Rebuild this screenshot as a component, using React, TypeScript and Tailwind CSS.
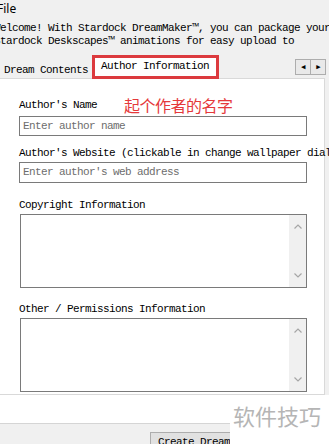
import { FC } from "react";

const mono = "font-['Liberation_Mono',monospace] text-[11px] tracking-[-0.6px]";

const Chevron: FC<{ up?: boolean }> = ({ up }) => (
  <svg width="8" height="5" viewBox="0 0 8 5" fill="none">
    <path
      d={up ? "M0.5 4.5 L4 1 L7.5 4.5" : "M0.5 0.5 L4 4 L7.5 0.5"}
      stroke="#a6a6a6"
      strokeWidth="1.2"
    />
  </svg>
);

const TextArea: FC = () => (
  <div className="ml-[1px] flex h-[74px] w-[287px] border border-[#7a7a7a] bg-white">
    <div className="flex-1" />
    <div className="flex w-[17px] flex-col items-center justify-between bg-[#f0f0f0] py-[9px]">
      <Chevron up />
      <Chevron />
    </div>
  </div>
);

const Field: FC<{ placeholder: string; h: string }> = ({ placeholder, h }) => (
  <div
    className={`flex w-[288px] items-center border border-[#7a7a7a] bg-white pl-[3px] text-[#6d6d6d] ${h} ${mono}`}
  >
    {placeholder}
  </div>
);

const App: FC = () => {
  return (
    <div className="relative h-[444px] w-[329px] overflow-hidden bg-[#f0f0f0] text-black">
      {/* menu */}
      <div className="flex h-[18px] items-center font-['Noto_Sans',sans-serif] text-[12px]">
        <span className="-ml-[3px]">File</span>
      </div>

      {/* welcome text */}
      <div className={`mt-[4px] -ml-[6px] whitespace-nowrap leading-[13px] ${mono}`}>
        <div>Welcome! With Stardock DreamMaker™, you can package your</div>
        <div>Stardock Deskscapes™ animations for easy upload to</div>
      </div>

      {/* tabs */}
      <div className={`relative z-10 mt-[7px] -mb-[1px] flex h-[24px] items-end ${mono}`}>
        <div className="flex h-[20px] w-[92px] items-center pl-[4px] pt-[3px]">Dream Contents</div>
        <div className="flex h-[24px] w-[127px] items-center border-[3px] border-[#dc3a3e] bg-white pl-[6px] pb-[1px]">
          Author Information
        </div>
        <div className="mr-[3px] mb-[4px] ml-auto flex self-end">
          <div className="flex h-[16px] w-[16px] items-center justify-center border border-[#adadad] bg-[#e9e9e9] text-[7px] leading-none text-black">
            ◀
          </div>
          <div className="-ml-[1px] flex h-[16px] w-[16px] items-center justify-center border border-[#adadad] bg-[#e9e9e9] text-[7px] leading-none text-black">
            ▶
          </div>
        </div>
      </div>

      {/* panel */}
      <div className={`-ml-[2px] h-[317px] w-[327px] border border-[#d9d9d9] bg-white pl-[20px] ${mono}`}>
        <div className="mt-[19px] flex h-[14px] items-center leading-[14px]">
          <span>Author's Name</span>
          <span className="ml-[27px] font-['Noto_Sans_CJK_SC',sans-serif] text-[16px] tracking-[-0.5px] text-[#e5393b]">
            起个作者的名字
          </span>
        </div>
        <div className="mt-[4px]">
          <Field placeholder="Enter author name" h="h-[20px]" />
        </div>
        <div className="mt-[10px] h-[14px] whitespace-nowrap leading-[14px]">
          Author's Website (clickable in change wallpaper dialog)
        </div>
        <div className="mt-[2px]">
          <Field placeholder="Enter author's web address" h="h-[21px]" />
        </div>
        <div className="mt-[15px] h-[14px] leading-[14px]">Copyright Information</div>
        <div className="mt-[2px]">
          <TextArea />
        </div>
        <div className="mt-[14px] h-[14px] leading-[14px]">Other / Permissions Information</div>
        <div className="mt-[2px]">
          <TextArea />
        </div>
      </div>

      {/* gap area */}
      <div className="h-[28px] bg-white" />

      {/* bottom bar */}
      <div className="h-[21px] overflow-hidden border-t border-[#d5d5d5] bg-[#f0f0f0] pt-[8px] pl-[150px]">
        <div className={`flex h-[24px] w-[110px] items-start border border-[#adadad] bg-[#e1e1e1] pl-[7px] pt-[1px] ${mono}`}>
          Create Dream
        </div>
      </div>

      {/* watermark */}
      <div className="absolute right-0 bottom-0 flex h-[46px] w-[99px] items-start bg-white pl-[3px] pt-[4px] font-['Noto_Sans_CJK_SC',sans-serif] text-[22px] leading-[26px] text-[#b5b5b5]">
        软件技巧
      </div>
    </div>
  );
};

export default App;
